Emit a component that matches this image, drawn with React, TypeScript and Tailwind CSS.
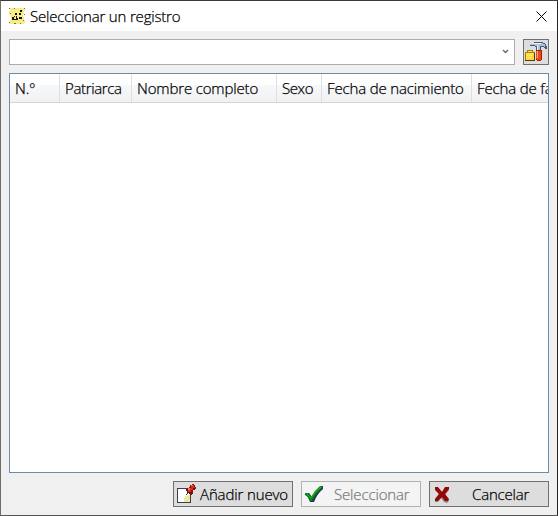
import type { ReactNode } from "react";

const text = "font-['Open_Sans','Noto_Sans',sans-serif] whitespace-nowrap [-webkit-text-stroke:0.25px_currentColor]";

function AppIcon() {
  return (
    <svg width="16" height="16" viewBox="0 0 16 16" shapeRendering="crispEdges">
      <path d="M1 0h15v3h-1v3h-1v3h1v3h1v3h-1v1H0v-2h1v-2h1V9H1V6H0V3h1z" fill="#f8ec88" />
      <path d="M0 0h1v1H0zm5 0h1v1H5zm10 0h1v1h-1zM1 5h1v1H1zm14 1h1v1h-1zm-1 6h1v1h-1zM0 14h1v1H0zm5 1h2v1H5zm6 0h1v1h-1z" fill="#776f4b" />
      <path d="M11 2h2v2h-2zM6 5h2v2H6zm4 0h2v2h-2zM5 8h1v1H5zm-2 1h2v2H3zm4-1h1v2H7zm3 1h3v2h-3zm-7 2h6v1H3zm4-1h2v1H7z" fill="#171506" />
    </svg>
  );
}

function ToolsIcon() {
  return (
    <svg width="24" height="24" viewBox="0 0 24 24" className="block shrink-0" shapeRendering="crispEdges">
      <path d="M1 12h2v-2h6v2h2v9H1z" fill="#a67c00" />
      <path d="M2 13h8v7H2z" fill="#ffd83a" />
      <path d="M4 11h4v1H4z" fill="#ffe878" />
      <path d="M2 13h1v1H2zm2 0h1v1H4zm2 0h1v1H6zm2 0h1v1H8zM3 15h1v1H3zm2 0h1v1H5zm2 0h1v1H7zm-5 2h1v1H2zm2 0h1v1H4zm2 0h1v1H6z" fill="#fff5a2" />
      <path d="M1 20h10v1H1zm9-7h1v8h-1z" fill="#563c00" />
      <path d="M6 4h4V2h9v1h2v1h1v2h1v3h-2V8h-1V7h-3v4h-5V7h-1V6H6z" fill="#465873" />
      <path d="M6 4h4V3h9v1h2v3h-1V6h-4v4h-3V6h-2V5H6z" fill="#a9bfdc" />
      <path d="M10 3h7v1h-7zm3 2h1v5h-1z" fill="#f1f6ff" />
      <path d="M12 10h6v10h-1v1h-4v-1h-1z" fill="#9f2300" />
      <path d="M12 11h5v9h-4v-1h-1z" fill="#ef4818" />
      <path d="M13 11h1v7h-1z" fill="#ffab86" />
    </svg>
  );
}

function NoteIcon() {
  return (
    <svg width="20" height="20" viewBox="0 0 20 20" shapeRendering="crispEdges">
      <path d="M0 4h14v15H0z" fill="#3b3e4b" />
      <path d="M1 5h12v13H1z" fill="#fff" />
      <path d="M7 18v-4h1v-2h2v-1h3v7z" fill="#e9e99f" />
      <path d="M10 9h1v1h-1zM9 10h1v1H9z" fill="#34333a" />
      <path d="M10 4h2V3h1V1h2V0h2v1h1v2h1v2h-1v1h-2v4h-1v1h-2v-1h-1V9h-2V7h-1z" fill="#821211" />
      <path d="M11 5h2V4h1V2h2V1h1v2h1v1h-2v2h-2v3h-1V8h-2z" fill="#d92b20" />
      <path d="M14 1h2v1h-2zm-3 3h2v2h-2z" fill="#ff7650" />
      <path d="M16 4h1v1h-1zm-3 4h1v1h-1z" fill="#3d1116" />
    </svg>
  );
}

function CheckIcon() {
  return (
    <svg width="20" height="18" viewBox="0 0 20 18" className="relative -left-px shrink-0">
      <path d="M1 8h4l3 4q4-7 9-11h2v3Q13 9 10 17H6Q4 11 1 10z" fill="#27345a" />
      <path d="M1 8h3l3 4Q11 5 16 1h2v2Q11 9 8 16H6Q4 11 1 9z" fill="#078b0e" />
      <path d="m3 9 4 4Q11 6 17 2" fill="none" stroke="#20b823" />
    </svg>
  );
}

function CrossIcon() {
  return (
    <svg width="16" height="17" viewBox="0 0 16 17" className="relative -left-px">
      <path d="M1 3q2-2 4 0l3 3 4-5h3v3l-4 5 4 6-2 2-3-1-3-4-3 4H1v-3l4-5z" fill="#8b8585" />
      <path d="M1 1h3l4 5 3-5h4v2l-4 5 4 5-1 2h-3l-3-4-4 4H1v-2l4-5-4-4z" fill="#940707" />
    </svg>
  );
}

function ActionButton({ icon, children, disabled = false }: { icon: ReactNode; children: ReactNode; disabled?: boolean }) {
  return (
    <button
      disabled={disabled}
      className={`flex h-[26px] w-[120px] items-center border pl-[3px] ${disabled ? "border-[#adb2b5] bg-[#f4f4f4] text-[#7c7c7c]" : "border-[#707070] bg-[#dddddd] text-black"}`}
    >
      <span className="flex w-5 shrink-0 justify-center">{icon}</span>
      {children}
    </button>
  );
}

const columns = [
  { label: "N.º", width: "w-[50px]", spacing: "" },
  { label: "Patriarca", width: "w-[72px]", spacing: "tracking-[-0.35px]" },
  { label: "Nombre completo", width: "w-[145px]", spacing: "tracking-[-0.15px]" },
  { label: "Sexo", width: "w-[45px]", spacing: "tracking-[-0.4px]" },
  { label: "Fecha de nacimiento", width: "w-[150px]", spacing: "tracking-[-0.15px]" },
  { label: "Fecha de fallecimiento", width: "w-[170px]", spacing: "tracking-[-0.15px]" },
];

export default function App() {
  return (
    <main className={`flex h-[516px] w-[558px] flex-col border border-t-[#3c3a3e] border-r-[#242428] border-b-[#555] border-l-[#6d6d6d] bg-[#f0f0f0] text-[15px] font-light text-black ${text}`}>
      <header className="flex h-[30px] shrink-0 items-center bg-white pr-[10px] pl-2">
        <AppIcon />
        <h1 className="ml-[5px] flex-1 text-[15px] leading-5 font-light tracking-[-0.18px]">Seleccionar un registro</h1>
        <button aria-label="Cerrar">
          <svg width="11" height="11" viewBox="0 0 11 11"><path d="m.5.5 10 10m0-10-10 10" stroke="#000" fill="none" /></svg>
        </button>
      </header>
      <div className="flex min-h-0 flex-1 flex-col px-2 pt-2">
        <div className="flex gap-2">
          <div className="flex h-[26px] w-[506px] items-center justify-end border border-[#abadb3] bg-white pr-[5px]">
            <svg width="7" height="5" viewBox="0 0 7 5" className="mb-[2px]"><path d="m1 1 2.5 2.5L6 1" fill="none" stroke="#666" strokeWidth="1.3" /></svg>
          </div>
          <button aria-label="Herramientas" className="flex h-[26px] w-[26px] items-center justify-center border border-[#707070] bg-[#dddddd]"><ToolsIcon /></button>
        </div>
        <section className="mt-2 h-[400px] w-[540px] overflow-hidden border border-[#688caf] bg-white">
          <div className="flex h-[29px] w-[632px] border-b border-[#d5d5d5] bg-linear-to-b from-white from-40% via-[#f7f8fa] via-40% to-[#f0f1f3]">
            {columns.map((c) => (
              <div key={c.label} className={`flex shrink-0 items-center border-r border-[#dedfe1] pl-[5px] ${c.width}`}>
                <span className={c.spacing}>{c.label}</span>
              </div>
            ))}
          </div>
        </section>
        <footer className="mt-2 flex justify-end gap-2">
          <ActionButton icon={<NoteIcon />}><span className="ml-[3px] tracking-[-0.13px]">Añadir nuevo</span></ActionButton>
          <ActionButton icon={<CheckIcon />} disabled><span className="ml-[9px] tracking-[-0.15px]">Seleccionar</span></ActionButton>
          <ActionButton icon={<CrossIcon />}><span className="ml-[19px] tracking-[-0.18px]">Cancelar</span></ActionButton>
        </footer>
      </div>
    </main>
  );
}
